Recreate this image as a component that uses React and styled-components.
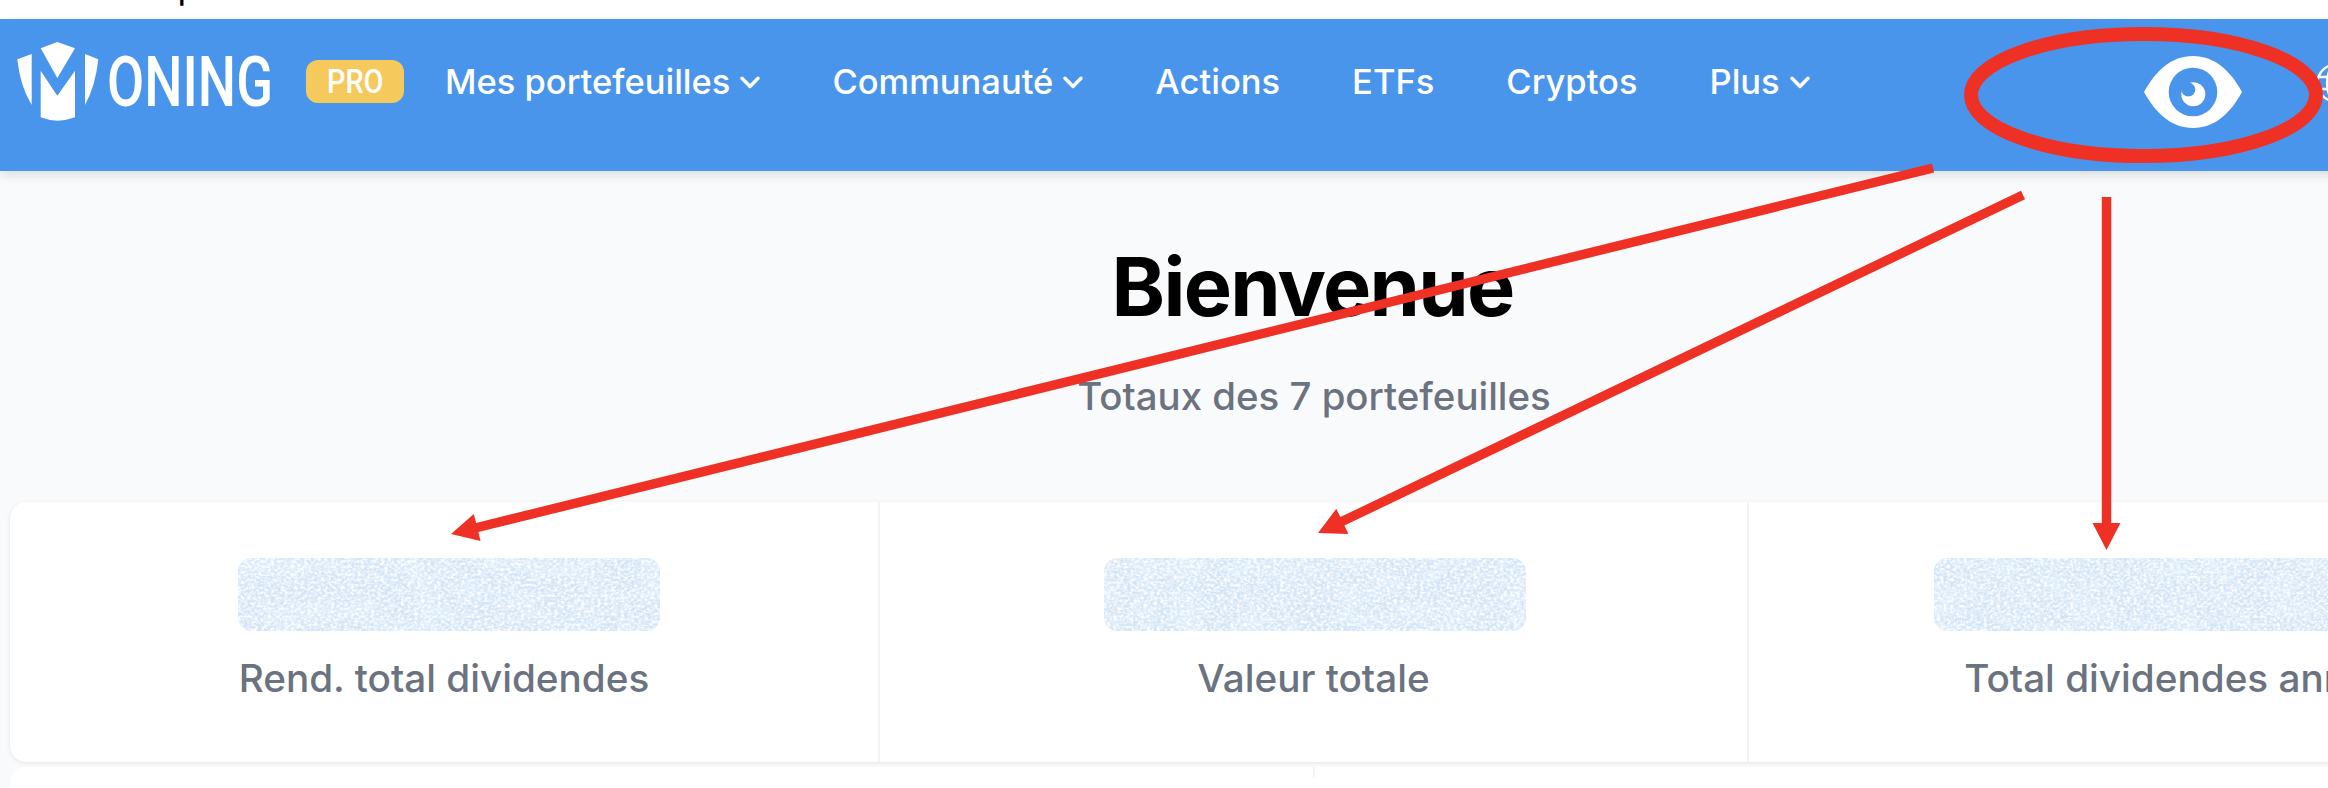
import React from "react";
import styled, { createGlobalStyle } from "styled-components";

const RED = "#ee3124";
const BLUE = "#4a95ec";

const navLinks = [
  { label: "Mes portefeuilles", caret: true },
  { label: "Communauté", caret: true },
  { label: "Actions" },
  { label: "ETFs" },
  { label: "Cryptos" },
  { label: "Plus", caret: true },
];

const stats = [
  { label: "Rend. total dividendes", width: 422, shift: 10 },
  { label: "Valeur totale", width: 422, shift: 2 },
  { label: "Total dividendes annuel", width: 500, shift: 0 },
];

// arrow from the tail to the tip, shaft and head as one polygon
function arrowPoints([x1, y1], [x2, y2], shaft = 4.7, headLen = 27, headHalf = 14) {
  const len = Math.hypot(x2 - x1, y2 - y1);
  const ux = (x2 - x1) / len;
  const uy = (y2 - y1) / len;
  const nx = -uy;
  const ny = ux;
  const bx = x2 - ux * headLen;
  const by = y2 - uy * headLen;
  const pts = [
    [x1 + nx * shaft, y1 + ny * shaft],
    [bx + nx * shaft, by + ny * shaft],
    [bx + nx * headHalf, by + ny * headHalf],
    [x2, y2],
    [bx - nx * headHalf, by - ny * headHalf],
    [bx - nx * shaft, by - ny * shaft],
    [x1 - nx * shaft, y1 - ny * shaft],
  ];
  return pts.map((p) => p.join(",")).join(" ");
}

function Chevron() {
  return (
    <CaretIcon viewBox="0 0 20 13">
      <path d="M2 2.2 L10 10.5 L18 2.2" fill="none" stroke="#fff" strokeWidth="3.4" strokeLinecap="round" strokeLinejoin="round" />
    </CaretIcon>
  );
}

function Logo() {
  return (
    <LogoSvg viewBox="0 0 257 80">
      <g fill="#fff">
        <path d="M23.7 6.3 L40.3 0 L58 6.3 L40.3 36 Z" />
        <path d="M23.7 28.7 L40.3 53.7 L58 28.7 V75.3 Q40.3 82 23.7 75.3 Z" />
        <path d="M0.3 17.3 L14.7 12 V63 Q3 44 0.3 17.3 Z" />
        <path d="M81.3 17.3 L68 12 V63 Q78.5 44 81.3 17.3 Z" />
        <text
          x="90"
          y="64"
          textLength="166"
          lengthAdjust="spacingAndGlyphs"
          fontFamily="Roboto, sans-serif"
          fontSize="70"
          fontWeight="500"
        >
          ONING
        </text>
      </g>
    </LogoSvg>
  );
}

function Eye() {
  return (
    <EyeIcon viewBox="0 0 98 72">
      <path d="M0 36 C12 14 28 0 49 0 S86 14 98 36 C86 58 70 72 49 72 S12 58 0 36 Z" fill="#fff" />
      <circle cx="49" cy="36" r="24.3" fill={BLUE} />
      <circle cx="49.3" cy="38.3" r="12" fill="#fff" />
      <circle cx="44.3" cy="33.6" r="7" fill={BLUE} />
    </EyeIcon>
  );
}

function Globe() {
  return (
    <GlobeIcon viewBox="0 0 40 40" fill="none" stroke="#fff" strokeWidth="2.4">
      <circle cx="20" cy="20" r="18.5" />
      <ellipse cx="20" cy="20" rx="9" ry="18.5" />
      <path d="M3.5 14 H36.5 M3.5 26 H36.5" />
    </GlobeIcon>
  );
}

function Masked({ width, shift, seed }) {
  return (
    <MaskedValue $width={width} $shift={shift}>
      <svg width="100%" height="100%">
        <filter id={`blotch-${seed}`}>
          <feTurbulence type="fractalNoise" baseFrequency="0.03 0.045" numOctaves="2" seed={seed + 3} />
          <feColorMatrix values="0 0 0 0 0.7  0 0 0 0 0.83  0 0 0 0 0.96  3 0 0 0 -1.25" />
        </filter>
        <filter id={`grain-${seed}`}>
          <feTurbulence type="fractalNoise" baseFrequency="0.3 0.38" numOctaves="3" seed={seed} />
          <feColorMatrix values="0 0 0 0 1  0 0 0 0 1  0 0 0 0 1  2.4 0 0 0 -0.85" />
        </filter>
        <rect width="100%" height="100%" filter={`url(#blotch-${seed})`} />
        <rect width="100%" height="100%" filter={`url(#grain-${seed})`} />
      </svg>
    </MaskedValue>
  );
}

export default function App() {
  return (
    <>
      <GlobalStyle />
      <Page>
        <TopStrip>
          <ClippedLine>p</ClippedLine>
        </TopStrip>

        <Nav>
          <Logo />
          <ProBadge>
            <span>PRO</span>
          </ProBadge>
          <NavLinks>
            {navLinks.map((link) => (
              <NavLink key={link.label}>
                {link.label}
                {link.caret && <Chevron />}
              </NavLink>
            ))}
          </NavLinks>
          <NavIcons>
            <Eye />
            <Globe />
          </NavIcons>
        </Nav>

        <Main>
          <Title>Bienvenue</Title>
          <Subtitle>Totaux des 7 portefeuilles</Subtitle>

          <StatCard>
            {stats.map((s, i) => (
              <StatCell key={s.label}>
                <Masked width={s.width} shift={s.shift} seed={i + 2} />
                <StatLabel>{s.label}</StatLabel>
              </StatCell>
            ))}
          </StatCard>

          <SecondCard>
            <SecondCell />
            <SecondCell />
          </SecondCard>
        </Main>

        <Annotations viewBox="0 0 2328 788">
          <ellipse cx="2143.5" cy="95" rx="172.5" ry="61" fill="none" stroke={RED} strokeWidth="14" />
          <polygon points={arrowPoints([1933, 168], [451, 534])} fill={RED} />
          <polygon points={arrowPoints([2023, 195], [1318, 533])} fill={RED} />
          <polygon points={arrowPoints([2106.5, 197], [2106.5, 550])} fill={RED} />
        </Annotations>
      </Page>
    </>
  );
}

const GlobalStyle = createGlobalStyle`
  html, body {
    margin: 0;
    padding: 0;
    width: 2328px;
    height: 788px;
    overflow: hidden;
    background: #ffffff;
  }
`;

const Page = styled.div`
  position: relative;
  width: 2628px;
  height: 788px;
  overflow: hidden;
  font-family: Inter, "Liberation Sans", sans-serif;
  background: #f9fafb;
`;

const TopStrip = styled.div`
  height: 19px;
  overflow: hidden;
  background: #ffffff;
  padding-left: 178px;
`;

const ClippedLine = styled.div`
  margin-top: -26px;
  font-size: 30px;
  font-weight: 500;
  line-height: 30px;
  color: #000000;
`;

const Nav = styled.nav`
  display: flex;
  align-items: flex-start;
  height: 152px;
  box-sizing: border-box;
  padding: 23px 272px 0 17px;
  background: ${BLUE};
  box-shadow: 0 4px 10px rgba(0, 0, 0, 0.12);
  position: relative;
`;

const LogoSvg = styled.svg`
  width: 257px;
  height: 80px;
  flex: none;
`;

const ProBadge = styled.div`
  flex: none;
  width: 98px;
  height: 43px;
  margin: 18px 0 0 32px;
  display: flex;
  align-items: center;
  justify-content: center;
  border-radius: 12px;
  background: #f6c95c;
  color: #ffffff;
  font-family: Roboto, sans-serif;
  font-size: 34px;
  font-weight: 500;
  line-height: 40px;

  span {
    display: inline-block;
    transform: scaleX(0.85) translateY(-1px);
  }
`;

const NavLinks = styled.div`
  display: flex;
  gap: 72px;
  margin: 20px 0 0 41px;
`;

const NavLink = styled.div`
  display: flex;
  align-items: center;
  gap: 10px;
  color: #ffffff;
  font-size: 34.5px;
  font-weight: 500;
  line-height: 40px;
`;

const CaretIcon = styled.svg`
  width: 20px;
  height: 13px;
  flex: none;
`;

const NavIcons = styled.div`
  margin-left: auto;
  display: flex;
  gap: 74px;
  padding-top: 14px;
`;

const EyeIcon = styled.svg`
  width: 98px;
  height: 72px;
  flex: none;
`;

const GlobeIcon = styled.svg`
  width: 40px;
  height: 40px;
  flex: none;
  margin-top: 7px;
`;

const Main = styled.main`
  padding: 66px 10px 0;
`;

const Title = styled.h1`
  margin: 0;
  padding-right: 3px;
  text-align: center;
  font-size: 81px;
  line-height: 100px;
  font-weight: 700;
  letter-spacing: -1.7px;
  color: #000000;
`;

const Subtitle = styled.p`
  margin: 35px 0 82px;
  text-align: center;
  font-size: 38.4px;
  line-height: 48px;
  font-weight: 500;
  color: #6b7280;
`;

const StatCard = styled.section`
  display: grid;
  grid-template-columns: 868px 869px 1fr;
  height: 260px;
  border-radius: 16px;
  background: #ffffff;
  box-shadow: 0 1px 4px rgba(0, 0, 0, 0.09);
`;

const StatCell = styled.div`
  display: flex;
  flex-direction: column;
  align-items: center;
  padding-top: 56px;
  border-left: 2px solid #f3f4f6;

  &:first-child {
    border-left: 0;
  }
`;

const MaskedValue = styled.div`
  width: ${(p) => p.$width}px;
  height: 73px;
  margin-left: ${(p) => p.$shift}px;
  border-radius: 14px;
  overflow: hidden;
  background: #d3e4f6;
  flex: none;
`;

const StatLabel = styled.div`
  margin-top: 24px;
  font-size: 38.7px;
  line-height: 46px;
  font-weight: 500;
  color: #6b7280;
  white-space: nowrap;
`;

const SecondCard = styled.section`
  display: grid;
  grid-template-columns: 1303px 1fr;
  height: 60px;
  margin-top: 5px;
  border-radius: 16px 16px 0 0;
  background: #ffffff;
`;

const SecondCell = styled.div`
  height: 10px;

  & + & {
    border-left: 2px solid #f3f4f6;
  }
`;

const Annotations = styled.svg`
  position: absolute;
  top: 0;
  left: 0;
  width: 2328px;
  height: 788px;
  pointer-events: none;
`;
